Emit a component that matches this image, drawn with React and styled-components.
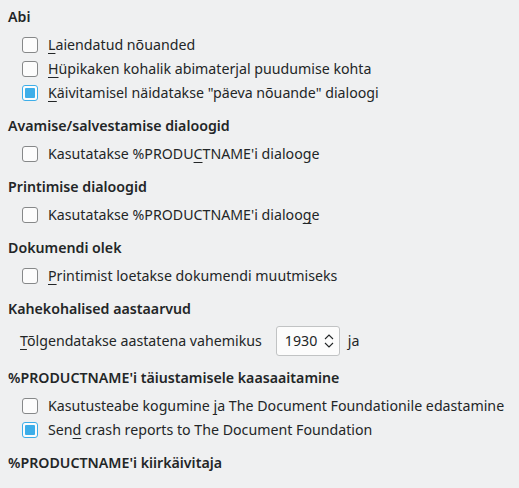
import React from 'react'
import styled, {createGlobalStyle} from 'styled-components'

const GlobalStyle = createGlobalStyle`
	html, body {
		margin: 0;
		padding: 0;
		background: #eff0f1;
	}
	body {
		font-family: "Noto Sans", "DejaVu Sans", sans-serif;
		font-size: 14.2px;
		color: #232627;
	}
`;

const Page = styled.div`
	display: flex;
	flex-direction: column;
	gap: 11px;
	width: 519px;
	height: 488px;
	padding: 7px 0 0 8px;
	box-sizing: border-box;
	overflow: hidden;
`;

const Section = styled.section`
	display: flex;
	flex-direction: column;
	gap: 6px;
`;

const Title = styled.div`
	font-weight: 600;
	line-height: 20px;
	height: 20px;
	white-space: nowrap;
`;

const Body = styled.div`
	display: flex;
	flex-direction: column;
	padding-left: 12px;
`;

const Row = styled.label`
	display: flex;
	align-items: center;
	height: 24px;
	line-height: 20px;
	white-space: nowrap;
`;

const Box = styled.span`
	position: relative;
	width: 16px;
	height: 16px;
	margin-left: 2px;
	margin-right: 10px;
	box-sizing: border-box;
	border: 1px solid ${props => props.checked ? '#3daee9' : '#868889'};
	border-radius: 3px;
	background: #fcfcfc;
	flex-shrink: 0;

	&::after {
		content: '';
		display: ${props => props.checked ? 'block' : 'none'};
		position: absolute;
		inset: 2px;
		background: #3daee9;
		border-radius: 1px;
	}
`;

const Key = styled.span`
	text-decoration: underline;
	text-decoration-thickness: 1px;
	text-underline-offset: 3px;
`;

const SpinRow = styled.div`
	display: flex;
	align-items: center;
	height: 32px;
	line-height: 20px;
	white-space: nowrap;
`;

const Spin = styled.div`
	display: flex;
	align-items: center;
	justify-content: space-between;
	width: 64px;
	height: 30px;
	margin: 0 8px 0 14px;
	padding: 0 4px 0 8px;
	box-sizing: border-box;
	border: 1px solid #c1c3c4;
	border-radius: 3px;
	background: #fcfcfc;
`;

const Arrows = styled.svg`
	width: 12px;
	height: 20px;
	display: block;
`;

const Check = ({checked, children}) => (
	<Row>
		<Box checked={checked}/>
		<span>{children}</span>
	</Row>
);

export default function App() {
	return (
		<>
			<GlobalStyle/>
			<Page>
				<Section>
					<Title>Abi</Title>
					<Body>
						<Check><Key>L</Key>aiendatud nõuanded</Check>
						<Check><Key>H</Key>üpikaken kohalik abimaterjal puudumise kohta</Check>
						<Check checked><Key>K</Key>äivitamisel näidatakse "päeva nõuande" dialoogi</Check>
					</Body>
				</Section>
				<Section>
					<Title>Avamise/salvestamise dialoogid</Title>
					<Body>
						<Check>Kasutatakse %PRODU<Key>C</Key>TNAME'i dialooge</Check>
					</Body>
				</Section>
				<Section>
					<Title>Printimise dialoogid</Title>
					<Body>
						<Check>Kasutatakse %PRODUCTNAME'i dialoo<Key>g</Key>e</Check>
					</Body>
				</Section>
				<Section>
					<Title>Dokumendi olek</Title>
					<Body>
						<Check><Key>P</Key>rintimist loetakse dokumendi muutmiseks</Check>
					</Body>
				</Section>
				<Section>
					<Title>Kahekohalised aastaarvud</Title>
					<Body>
						<SpinRow>
							<span><Key>T</Key>õlgendatakse aastatena vahemikus</span>
							<Spin>
								<span>1930</span>
								<Arrows viewBox="0 0 12 20">
									<path d="M2 8 L6 4 L10 8" fill="none" stroke="#232627" strokeWidth="1.1"/>
									<path d="M2 12 L6 16 L10 12" fill="none" stroke="#232627" strokeWidth="1.1"/>
								</Arrows>
							</Spin>
							<span>ja</span>
						</SpinRow>
					</Body>
				</Section>
				<Section>
					<Title>%PRODUCTNAME'i täiustamisele kaasaaitamine</Title>
					<Body>
						<Check>Kasutusteabe kogumine <Key>j</Key>a The Document Foundationile edastamine</Check>
						<Check checked>Sen<Key>d</Key> crash reports to The Document Foundation</Check>
					</Body>
				</Section>
				<Section>
					<Title>%PRODUCTNAME'i kiirkäivitaja</Title>
				</Section>
			</Page>
		</>
	)
}
